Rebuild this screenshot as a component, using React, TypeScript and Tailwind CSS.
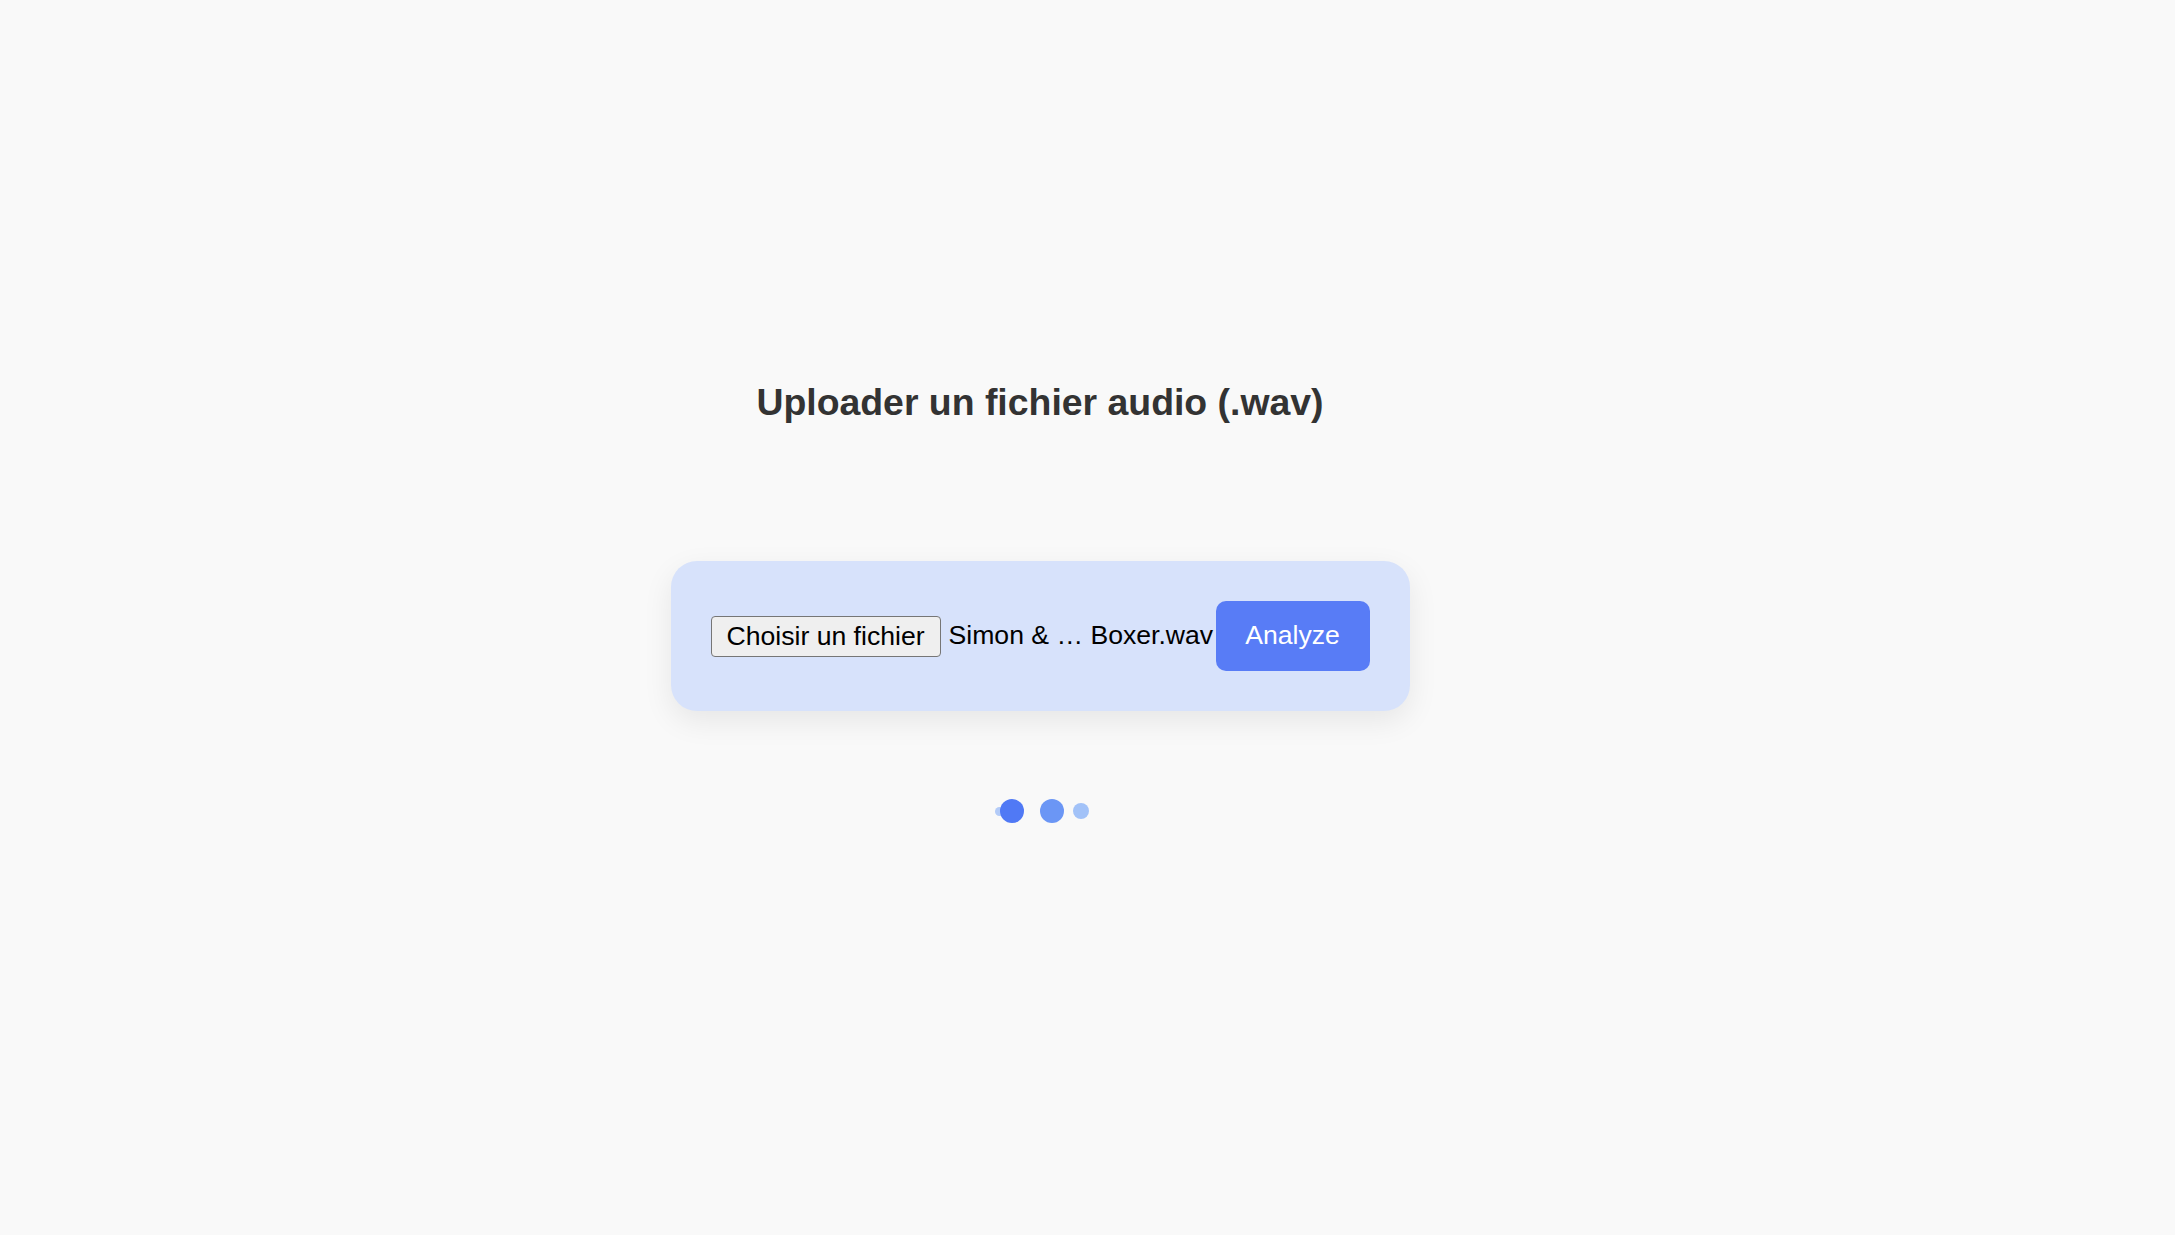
export default function App() {
  return (
    <div
      className="min-h-[1235px] w-full bg-[#f9f9f9] flex flex-col items-center pr-[95px] pt-[381px]"
      style={{ fontFamily: '"Liberation Sans", Arial, sans-serif' }}
    >
      <h2 className="text-[37.4px] leading-[42px] font-bold text-[#333333]">
        Uploader un fichier audio (.wav)
      </h2>

      <div className="mt-[138px] flex items-center bg-[#d7e2fb] rounded-[26px] p-[40px] shadow-[0_10px_30px_rgba(0,0,0,0.08)]">
        <div className="flex items-center w-[505px] text-[26.6px] text-black">
          <button
            type="button"
            className="h-[41px] px-[15px] bg-[#efefef] border-[1.5px] border-[#767676] rounded-[4px] leading-none"
          >
            Choisir un fichier
          </button>
          <span className="ml-[8px] whitespace-nowrap">Simon &amp; … Boxer.wav</span>
        </div>
        <button
          type="button"
          className="h-[70px] w-[154px] bg-[#587cf6] text-white text-[26.6px] rounded-[10px]"
        >
          Analyze
        </button>
      </div>

      {/* loader dots */}
      <div className="mt-[88px] ml-[9px] flex items-center">
        <div className="relative w-[24px] h-[24px]">
          <span className="absolute left-[-5px] top-[7.5px] w-[9px] h-[9px] rounded-full bg-[#b3cbf8]" />
          <span className="relative block w-[24px] h-[24px] rounded-full bg-[#5079f5]" />
        </div>
        <span className="ml-[16px] w-[24px] h-[24px] rounded-full bg-[#6b96f5]" />
        <span className="ml-[9px] w-[16px] h-[16px] rounded-full bg-[#a2c2f8]" />
      </div>
    </div>
  );
}
